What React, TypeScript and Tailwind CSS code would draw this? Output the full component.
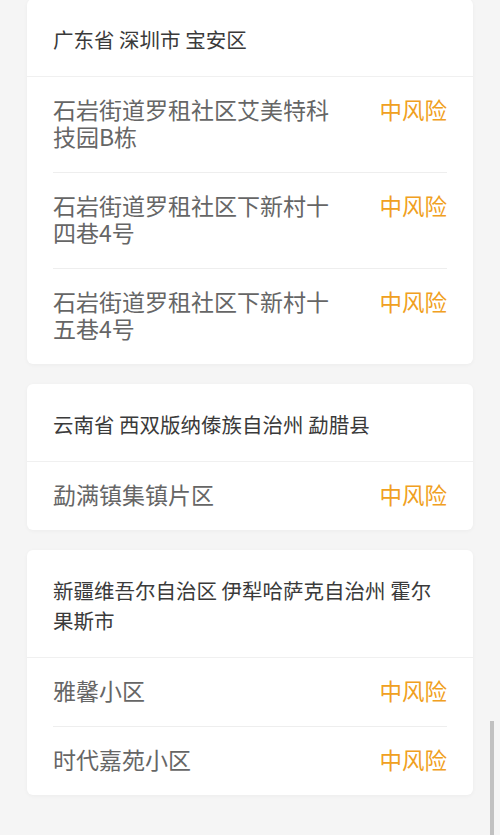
const groups = [
  {
    area: "广东省 深圳市 宝安区",
    places: ["石岩街道罗租社区艾美特科技园B栋", "石岩街道罗租社区下新村十四巷4号", "石岩街道罗租社区下新村十五巷4号"],
  },
  {
    area: "云南省 西双版纳傣族自治州 勐腊县",
    places: ["勐满镇集镇片区"],
  },
  {
    area: "新疆维吾尔自治区 伊犁哈萨克自治州 霍尔果斯市",
    places: ["雅馨小区", "时代嘉苑小区"],
  },
];

export default function App() {
  return (
    <div
      className="min-h-[835px] bg-[#f5f5f5] px-[27px] pb-10"
      style={{ fontFamily: '"Noto Sans CJK SC", "Noto Sans", sans-serif' }}
    >
      <div className="flex flex-col gap-5 -mt-px">
        {groups.map((g) => (
          <div key={g.area} className="bg-white rounded-md shadow-[0_1px_4px_rgba(0,0,0,0.04)]">
            <div className="px-[26px] pt-[25px] pb-[22px] text-[20.5px] leading-[30px] text-[#3a3a3a] border-b border-[#f0f0f0]">
              {g.area}
            </div>
            <div className="px-[26px]">
              {g.places.map((p, i) => (
                <div
                  key={p}
                  className={`flex justify-between items-start pt-[19px] pb-[22px] ${i > 0 ? "border-t border-[#eeeeee]" : ""}`}
                >
                  <span className="w-[290px] text-[23px] leading-[27px] text-[#666]">{p}</span>
                  <span className="text-[22.5px] leading-[27px] text-[#f0a021]">中风险</span>
                </div>
              ))}
            </div>
          </div>
        ))}
      </div>
      <div className="fixed right-[6px] top-[721px] w-[4px] h-[114px] bg-[#c1c1c1]" />
    </div>
  );
}
